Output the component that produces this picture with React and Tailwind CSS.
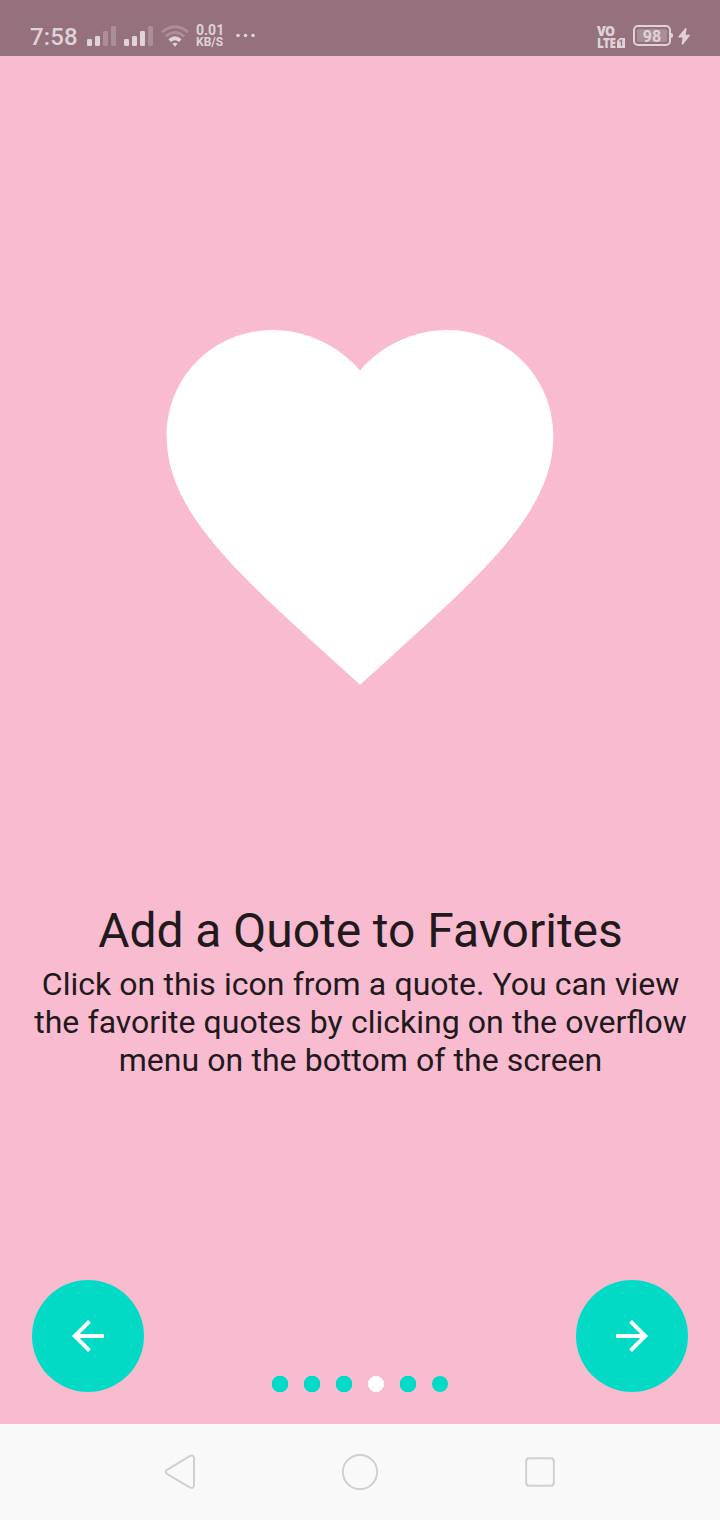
const HEART =
  "M12 21.35l-1.45-1.32C5.4 15.36 2 12.28 2 8.5 2 5.42 4.42 3 7.5 3c1.74 0 3.41.81 4.5 2.09C13.09 3.81 14.76 3 16.5 3 19.58 3 22 5.42 22 8.5c0 3.78-3.4 6.86-8.55 11.54L12 21.35z";
const ARROW_BACK = "M20 11H7.83l5.59-5.59L12 4l-8 8 8 8 1.41-1.41L7.83 13H20v-2z";
const ARROW_FORWARD = "M12 4l-1.41 1.41L16.17 11H4v2h12.17l-5.58 5.59L12 20l8-8z";

function Signal({ level }) {
  const heights = [7, 10, 15, 20];
  return (
    <svg width="29" height="20" viewBox="0 0 29 20" fill="#dfd3d7">
      {heights.map((h, i) => (
        <rect key={h} x={i * 8} y={20 - h} width="5" height={h} rx="1.3" opacity={i < level ? 1 : 0.3} />
      ))}
    </svg>
  );
}

function Wifi() {
  return (
    <svg width="28" height="22" viewBox="0 0 28 22" fill="none" stroke="#dfd3d7" strokeWidth="3">
      <path d="M1 7.2Q14 -3.6 27 7.2" opacity="0.3" />
      <path d="M4.8 11.4Q14 3.6 23.2 11.4" opacity="0.3" />
      <path d="M8.6 15.6Q14 11 19.4 15.6" strokeWidth="3.8" />
      <path d="M11.4 18.6Q14 17 16.6 18.6L14 21.8Z" fill="#dfd3d7" stroke="none" />
    </svg>
  );
}

function StatusBar() {
  return (
    <header className="flex h-14 items-start bg-[#95707d] pr-[30px] pl-[30px] text-[#dfd3d7]">
      <span className="mt-[23px] w-[57px] text-2xl leading-7 font-medium tracking-[0.1px]">7:58</span>
      <div className="mt-[26px] flex gap-2">
        <Signal level={2} />
        <Signal level={3} />
      </div>
      <div className="mt-[25px] ml-2">
        <Wifi />
      </div>
      <div className="mt-[24px] ml-[7px] w-[40px] font-bold">
        <div className="text-[14px] leading-[13px]">0.01</div>
        <div className="text-[12px] leading-[11px]">KB/S</div>
      </div>
      <svg className="mt-[33px]" width="20" height="5" viewBox="0 0 20 5" fill="#dfd3d7">
        <circle cx="2" cy="2.5" r="1.8" />
        <circle cx="9.5" cy="2.5" r="1.8" />
        <circle cx="17" cy="2.5" r="1.8" />
      </svg>
      <div className="mt-[25px] ml-auto w-9 font-['Noto_Sans',sans-serif] font-black">
        <div className="h-3 w-[18px] origin-left scale-x-90 text-[14px] leading-[12px] tracking-[-0.8px]">VO</div>
        <div className="flex items-start text-[14px] leading-[12px] tracking-[-0.7px]">
          <span className="w-5 origin-left scale-x-[0.84]">LTE</span>
          <svg className="mt-[1px] shrink-0" width="8" height="10" viewBox="0 0 8 10">
            <path d="M3 0H8V10H0V3Z" fill="#dfd3d7" />
            <path d="M2.5 3.3L4.5 2.3V8" fill="none" stroke="#95707d" strokeWidth="1.3" />
          </svg>
        </div>
      </div>
      <div className="mt-[25px] flex items-center">
        <div className="flex h-[21px] w-[38px] items-center justify-center rounded-[5px] border-2 border-[#dfd3d7] p-[2px]">
          <div className="flex h-full w-full items-center justify-center rounded-[2px] bg-[#ab8d97] pt-[2px] text-[16px] leading-none font-bold">
            98
          </div>
        </div>
        <div className="h-[5px] w-[2px] rounded-r-[2px] bg-[#dfd3d7]" />
      </div>
      <svg className="mt-[28px] ml-[5px]" width="12" height="17" viewBox="0 0 12 17" fill="#dfd3d7">
        <path d="M7.4 0L0.4 8.6V9.6H4.6L3.6 16.2L4.8 16.8L11.8 7.8V6.8H7.6L8.6 0.4Z" />
      </svg>
    </header>
  );
}

function RoundButton({ path, label }) {
  return (
    <button aria-label={label} className="flex size-28 items-center justify-center rounded-full bg-[#03dac5]">
      <svg width="48" height="48" viewBox="0 0 24 24" fill="white">
        <path d={path} />
      </svg>
    </button>
  );
}

function PageDots() {
  return (
    <div className="flex gap-4">
      {[0, 1, 2, 3, 4, 5].map((i) => (
        <svg key={i} width="16" height="16" viewBox="0 0 16 16" fill={i === 3 ? "#ffffff" : "#03dac5"}>
          {i < 3 || i === 4 ? (
            <path d="M5 0H11L13.9 2.1L16 5V11L13.9 13.9L11 16H5L2.1 13.9L0 11V5L2.1 2.1Z" />
          ) : (
            <circle cx="8" cy="8" r="8" />
          )}
        </svg>
      ))}
    </div>
  );
}

function NavigationBar() {
  return (
    <nav className="flex h-24 items-center justify-center gap-[140px] bg-[#f9f9f9]">
      <svg width="40" height="40" viewBox="0 0 40 40" fill="none" stroke="#d0d0d0" strokeWidth="2">
        <path d="M7 17.8L29.3 4.3Q33.8 2.2 34 6.4V32.8Q33.8 37.4 29.3 35.2L7 21.8Q4.4 19.8 7 17.8Z" />
      </svg>
      <svg width="40" height="40" viewBox="0 0 40 40" fill="none" stroke="#d0d0d0" strokeWidth="2">
        <circle cx="20" cy="20" r="17.1" />
      </svg>
      <svg width="40" height="40" viewBox="0 0 40 40" fill="none" stroke="#d0d0d0" strokeWidth="2">
        <rect x="6.2" y="6.2" width="27.6" height="27.6" rx="3" />
      </svg>
    </nav>
  );
}

export default function App() {
  return (
    <div className="flex h-[1520px] w-[720px] flex-col bg-[#f8bbd0] font-[Roboto,sans-serif]">
      <StatusBar />
      <main className="flex flex-1 flex-col items-center">
        <svg className="mt-[216px]" width="464" height="464" viewBox="0 0 24 24" fill="white">
          <path d={HEART} />
        </svg>
        <div className="mt-[167px] pl-[1px] text-center text-[#21191c]">
          <h1 className="text-5xl leading-[56px] [word-spacing:-0.2px]">Add a Quote to Favorites</h1>
          <p className="mt-[6px] text-[32px] leading-[38px] [word-spacing:0.25px]">
            Click on this icon from a quote. You can view
            <br />
            the favorite quotes by clicking on the overflow
            <br />
            menu on the bottom of the screen
          </p>
        </div>
        <div className="mt-auto flex w-full items-end justify-between px-8 pb-8">
          <RoundButton path={ARROW_BACK} label="Previous" />
          <PageDots />
          <RoundButton path={ARROW_FORWARD} label="Next" />
        </div>
      </main>
      <NavigationBar />
    </div>
  );
}
